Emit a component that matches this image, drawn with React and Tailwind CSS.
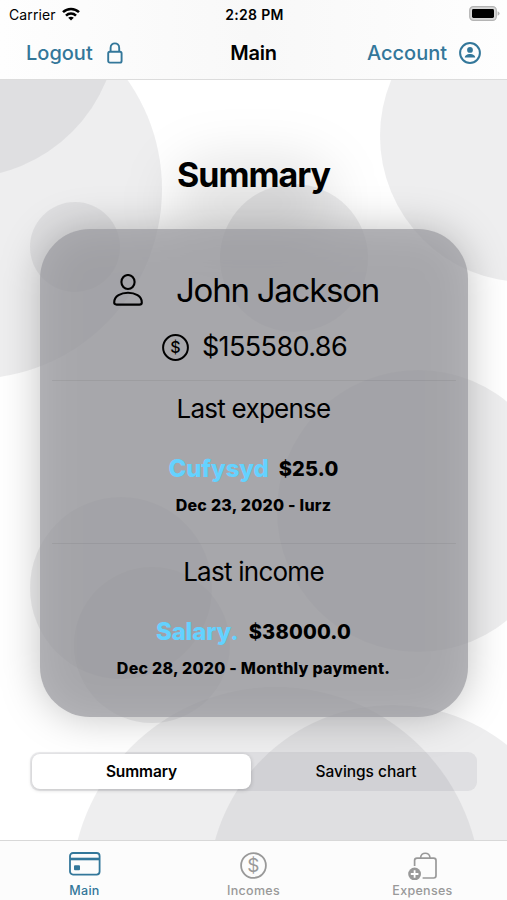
const circles = [
    { cx: -28, cy: 189, r: 190 },
    { cx: -39, cy: 21, r: 157 },
    { cx: 75, cy: 247, r: 45 },
    { cx: 294, cy: 258, r: 74 },
    { cx: 526, cy: 136, r: 146 },
    { cx: 418, cy: 511, r: 141 },
    { cx: 121, cy: 588, r: 91 },
    { cx: 152, cy: 645, r: 78 },
    { cx: 276, cy: 892, r: 205 },
    { cx: 392.5, cy: 889, r: 184 },
];

const Backdrop = () => (
    <svg className="absolute inset-0" width="507" height="900" viewBox="0 0 507 900" fill="#8e8e93" fillOpacity="0.15">
        {circles.map(({ cx, cy, r }) => (
            <circle key={`${cx}-${cy}`} cx={cx} cy={cy} r={r} />
        ))}
    </svg>
);

const WifiIcon = () => (
    <svg width="18" height="14" viewBox="0 0 18 14" fill="none" stroke="#000" strokeWidth="2.5">
        <path d="M1 5.2C5.4 0.8 12.6 0.8 17 5.2" />
        <path d="M4 8.6C6.8 5.8 11.2 5.8 14 8.6" />
        <path d="M9 13.6L6.2 10.8C7.9 9.3 10.1 9.3 11.8 10.8Z" fill="#000" stroke="none" />
    </svg>
);

const BatteryIcon = () => (
    <svg width="31" height="15" viewBox="0 0 31 15">
        <rect x="0.7" y="0.7" width="26.6" height="13.6" rx="3.6" fill="#d8d8d8" stroke="#b4b4b4" strokeWidth="1.2" />
        <rect x="3" y="3" width="22" height="9" rx="1.4" fill="#000" />
        <path d="M28.6 5.2Q30.6 6 30.6 7.5T28.6 9.8Z" fill="#b4b4b4" />
    </svg>
);

const LockIcon = () => (
    <svg width="16" height="22" viewBox="0 0 16 22" fill="none" stroke="currentColor" strokeWidth="1.9">
        <rect x="1.2" y="9.8" width="13.4" height="10.8" rx="1.6" />
        <path d="M3.6 9.8V6C3.6 -0.2 12.2 -0.2 12.2 6V9.8" />
    </svg>
);

const AccountIcon = () => (
    <svg width="22" height="22" viewBox="0 0 22 22" fill="none">
        <circle cx="11" cy="11" r="9.9" stroke="currentColor" strokeWidth="2" />
        <circle cx="11" cy="7.9" r="2.9" fill="currentColor" />
        <path d="M5.8 15.6C5.8 10.9 16.2 10.9 16.2 15.6Z" fill="currentColor" />
    </svg>
);

const PersonIcon = () => (
    <svg width="30" height="32" viewBox="0 0 30 32" fill="none" stroke="#000" strokeWidth="2.1">
        <ellipse cx="15" cy="8" rx="6.6" ry="7" />
        <path d="M1.2 28.4C1.2 15.6 28.8 15.6 28.8 28.4Q28.8 30.6 26.4 30.6H3.6Q1.2 30.6 1.2 28.4Z" />
    </svg>
);

const DollarIcon = ({ width, fontSize, fontWeight }) => (
    <svg width="27" height="27" viewBox="0 0 27 27" fill="none">
        <circle cx="13.5" cy="13.5" r="12.4" stroke="currentColor" strokeWidth={width} />
        <text x="13.5" y="13.5" dy="0.36em" textAnchor="middle" fontFamily="Inter" fontSize={fontSize} fontWeight={fontWeight} fill="currentColor">$</text>
    </svg>
);

const CardIcon = () => (
    <svg width="32" height="24" viewBox="0 0 32 24" fill="none" stroke="currentColor" strokeWidth="1.8">
        <rect x="1" y="1" width="29.6" height="21.6" rx="3" />
        <path d="M1 7H30.6" strokeWidth="2.6" />
        <rect x="5" y="13.2" width="6" height="5" rx="1" fill="currentColor" stroke="none" />
    </svg>
);

const BagIcon = () => (
    <svg width="30" height="28" viewBox="0 0 30 28" fill="none" stroke="currentColor" strokeWidth="1.7">
        <path d="M6.6 14V8.6Q6.6 6.2 9 6.2H25.6Q28 6.2 28 8.6V23.6Q28 26 25.6 26H14.6" />
        <path d="M12.6 6.2C12.6 -0.4 22 -0.4 22 6.2" />
        <circle cx="6.6" cy="22" r="6.4" fill="currentColor" stroke="none" />
        <path d="M6.6 18.2V25.8M2.8 22H10.4" stroke="#fff" strokeWidth="1.8" />
    </svg>
);

const LastEntry = ({ heading, name, amount, details }) => (
    <div className="flex h-[163px] flex-col items-center border-t border-black/6">
        <h2 className="mt-[10px] text-[26px] leading-9 tracking-[-0.75px]">{heading}</h2>
        <div className="mt-[24px] flex h-9 items-center gap-[10px] font-extrabold">
            <span className="text-[24px] tracking-[-0.15px] text-[#64d2ff]">{name}</span>
            <span className="text-[20px] tracking-[0.2px]">{amount}</span>
        </div>
        <p className="mt-[6px] text-[16px] leading-6 font-extrabold tracking-[0.25px]">{details}</p>
    </div>
);

export default function App() {
    return (
        <div className="relative flex h-[900px] w-[507px] flex-col overflow-hidden bg-white font-['Inter',sans-serif] text-black">
            <Backdrop />

            <header className="relative z-10 h-20 border-b border-[#dcdcdc] bg-linear-to-r from-[#fefefe] via-[#f8f8f8] to-[#fefefe]">
                <div className="grid h-7 grid-cols-3 items-center pr-[7px] pl-[9px] text-[14px]">
                    <div className="flex items-center gap-[6px] tracking-[0.1px]">Carrier <WifiIcon /></div>
                    <div className="text-center font-semibold tracking-[0.3px]">2:28 PM</div>
                    <div className="flex justify-end pb-[2px]"><BatteryIcon /></div>
                </div>
                <div className="grid h-[51px] grid-cols-3 items-center pr-[26px] pb-[2px] pl-[26px] text-[20px] text-[#33779a]">
                    <button className="flex items-center gap-[14px] font-medium">Logout <LockIcon /></button>
                    <h1 className="text-center font-semibold tracking-[-0.2px] text-black">Main</h1>
                    <button className="flex items-center justify-end gap-[12px] font-medium">Account <AccountIcon /></button>
                </div>
            </header>

            <main className="relative flex flex-1 flex-col items-center">
                {/* soft glow behind the title */}
                <div className="absolute top-[78px] left-[170px] h-[90px] w-[165px] rounded-full bg-black/10 blur-[26px]" />
                <h1 className="relative mt-[72px] text-[34px] leading-[46px] font-bold tracking-[-1px]">Summary</h1>

                <section className="relative mt-[31px] h-[488px] w-[428px]">
                    {/* the shadow shows through the translucent card */}
                    <div className="absolute inset-0 rounded-[50px] bg-black/24 blur-[20px]" />
                    <div className="relative h-full rounded-[50px] bg-[#9d9ca2]/72 px-3">
                        <div className="flex h-[151px] flex-col items-center">
                            <div className="mt-[40px] flex items-center gap-[33px] pr-[15px]">
                                <PersonIcon />
                                <span className="text-[33px] leading-[42px] tracking-[-1.25px]">John Jackson</span>
                            </div>
                            <div className="mt-[18px] flex items-center gap-[13px] pl-[2px]">
                                <DollarIcon width={2} fontSize={16} fontWeight={500} />
                                <span className="text-[27px] leading-9 tracking-[-0.6px]">$155580.86</span>
                            </div>
                        </div>
                        <LastEntry heading="Last expense" name="Cufysyd" amount="$25.0" details="Dec 23, 2020 - Iurz" />
                        <LastEntry heading="Last income" name="Salary." amount="$38000.0" details="Dec 28, 2020 - Monthly payment." />
                    </div>
                </section>

                <div className="relative mt-[35px] grid h-[39px] w-[447px] grid-cols-[219px_1fr] rounded-[9px] bg-[#767680]/12 p-[2px] text-[15.5px]">
                    <button className="rounded-lg bg-white font-semibold tracking-[-0.1px] shadow-[0_1px_4px_rgba(0,0,0,0.2)]">Summary</button>
                    <button className="pl-[6px] font-medium tracking-[-0.05px]">Savings chart</button>
                </div>
            </main>

            <nav className="relative grid h-[60px] grid-cols-3 border-t border-[#d8d8d8] bg-[#fcfcfc] text-[12.5px] font-medium tracking-[0.3px] text-[#999]">
                <button className="flex flex-col items-center text-[#33779a]">
                    <span className="flex h-[41px] items-center pt-[4px]"><CardIcon /></span>Main
                </button>
                <button className="flex flex-col items-center">
                    <span className="flex h-[41px] items-center pt-[8px]"><DollarIcon width={1.8} fontSize={19} fontWeight={400} /></span>Incomes
                </button>
                <button className="flex flex-col items-center">
                    <span className="flex h-[41px] items-center pt-[8px]"><BagIcon /></span>Expenses
                </button>
            </nav>
        </div>
    );
}
